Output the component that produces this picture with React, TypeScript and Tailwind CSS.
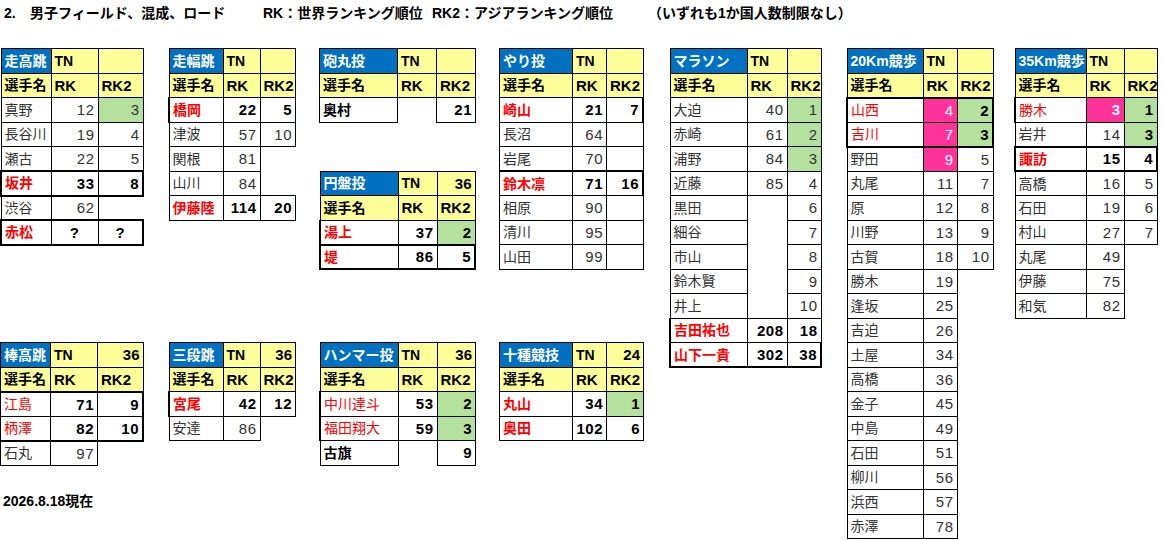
import React from 'react';

type Row = {
  n: string;
  rk?: string;
  rk2?: string;
  nc?: string;
  rkc?: string;
  rk2c?: string;
  mid?: boolean;
  b?: [string, string, string];
};

type SheetData = {
  title: string;
  tn: string;
  w: [string, string];
  rows: Row[];
};

// cell styles
const R = 'text-[#ff0000] font-bold';
const RN = 'text-[#ff0000]';
const K = 'text-black font-bold';
const G = 'bg-[#b4e19e]';
const P = 'bg-[#ff3399] text-white';
const X = 'border-t-0 border-r-0 border-b-0 border-l-0';
const NOB = 'border-b-0';
const NOTB = 'border-t-0 border-b-0';

const BOX: [string, string, string] = [
  'border-l-2 border-t-2 border-b-2',
  'border-t-2 border-b-2',
  'border-r-2 border-t-2 border-b-2',
];

const highJump: SheetData = {
  title: '走高跳', tn: '', w: ['w-[50px]', 'w-[47px]'],
  rows: [
    { n: '真野', rk: '12', rk2: '3', rk2c: G },
    { n: '長谷川', rk: '19', rk2: '4' },
    { n: '瀬古', rk: '22', rk2: '5' },
    { n: '坂井', rk: '33', rk2: '8', nc: R, rkc: K, rk2c: K, b: BOX },
    { n: '渋谷', rk: '62', b: ['', '', X] },
    { n: '赤松', rk: '?', rk2: '?', nc: R, rkc: K, rk2c: K, mid: true, b: BOX },
  ],
};

const longJump: SheetData = {
  title: '走幅跳', tn: '', w: ['w-[54px]', 'w-[37px]'],
  rows: [
    { n: '橋岡', rk: '22', rk2: '5', nc: R, rkc: K, rk2c: K, b: ['border-l-2', '', ''] },
    { n: '津波', rk: '57', rk2: '10' },
    { n: '関根', rk: '81', b: ['', '', X] },
    { n: '山川', rk: '84', b: ['', '', X] },
    { n: '伊藤陸', rk: '114', rk2: '20', nc: R, rkc: K, rk2c: K },
  ],
};

const shotPut: SheetData = {
  title: '砲丸投', tn: '', w: ['w-[78px]', 'w-[39px]'],
  rows: [{ n: '奥村', rk: '', rk2: '21', nc: K, rk2c: K, b: ['', NOB, ''] }],
};

const discus: SheetData = {
  title: '円盤投', tn: '36', w: ['w-[78px]', 'w-[39px]'],
  rows: [
    { n: '湯上', rk: '37', rk2: '2', nc: R, rkc: K, rk2c: `${K} ${G}`, b: ['border-l-2 border-b-2', 'border-b-2', 'border-b-2'] },
    { n: '堤', rk: '86', rk2: '5', nc: R, rkc: K, rk2c: K, b: ['border-l-2 border-b-2', 'border-b-2', 'border-r-2 border-b-2'] },
  ],
};

const javelin: SheetData = {
  title: 'やり投', tn: '', w: ['w-[73px]', 'w-[34px]'],
  rows: [
    { n: '崎山', rk: '21', rk2: '7', nc: R, rkc: K, rk2c: K, b: ['', '', 'border-r-2'] },
    { n: '長沼', rk: '64', rk2: '' },
    { n: '岩尾', rk: '70', rk2: '' },
    { n: '鈴木凛', rk: '71', rk2: '16', nc: R, rkc: K, rk2c: K, b: ['border-t-2', 'border-t-2', 'border-t-2 border-r-2'] },
    { n: '相原', rk: '90', rk2: '' },
    { n: '清川', rk: '95', rk2: '' },
    { n: '山田', rk: '99', rk2: '' },
  ],
};

const marathon: SheetData = {
  title: 'マラソン', tn: '', w: ['w-[77px]', 'w-[40px]'],
  rows: [
    { n: '大迫', rk: '40', rk2: '1', rk2c: G },
    { n: '赤崎', rk: '61', rk2: '2', rk2c: G },
    { n: '浦野', rk: '84', rk2: '3', rk2c: G },
    { n: '近藤', rk: '85', rk2: '4' },
    { n: '黒田', rk: '', rk2: '6', b: ['', NOB, ''] },
    { n: '細谷', rk: '', rk2: '7', b: ['', NOTB, ''] },
    { n: '市山', rk: '', rk2: '8', b: ['', NOTB, ''] },
    { n: '鈴木賢', rk: '', rk2: '9', b: ['', NOTB, ''] },
    { n: '井上', rk: '', rk2: '10', b: ['', 'border-t-0', ''] },
    { n: '吉田祐也', rk: '208', rk2: '18', nc: R, rkc: K, rk2c: K, b: ['border-l-2', '', ''] },
    { n: '山下一貴', rk: '302', rk2: '38', nc: R, rkc: K, rk2c: K, b: ['border-l-2 border-b-2', 'border-b-2', 'border-r-2 border-b-2'] },
  ],
};

const walk20: SheetData = {
  title: '20Km競歩', tn: '', w: ['w-[76px]', 'w-[34px]'],
  rows: [
    { n: '山西', rk: '4', rk2: '2', nc: RN, rkc: P, rk2c: `${K} ${G}`, b: ['border-l-2 border-t-2', 'border-t-2', 'border-t-2 border-r-2'] },
    { n: '吉川', rk: '7', rk2: '3', nc: RN, rkc: P, rk2c: `${K} ${G}`, b: ['border-l-2 border-b-2', 'border-b-2', 'border-b-2 border-r-2'] },
    { n: '野田', rk: '9', rk2: '5', rkc: P },
    { n: '丸尾', rk: '11', rk2: '7' },
    { n: '原', rk: '12', rk2: '8' },
    { n: '川野', rk: '13', rk2: '9' },
    { n: '古賀', rk: '18', rk2: '10' },
    ...['勝木:19', '逢坂:25', '吉迫:26', '土屋:34', '高橋:36', '金子:45', '中島:49', '石田:51', '柳川:56', '浜西:57', '赤澤:78'].map(
      (s): Row => {
        const [n, rk] = s.split(':');
        return { n, rk, b: ['', '', X] };
      },
    ),
  ],
};

const walk35: SheetData = {
  title: '35Km競歩', tn: '', w: ['w-[71px]', 'w-[38px]'],
  rows: [
    { n: '勝木', rk: '3', rk2: '1', nc: RN, rkc: `${P} font-bold`, rk2c: `${K} ${G}`, b: ['border-l-2', '', ''] },
    { n: '岩井', rk: '14', rk2: '3', rk2c: `${K} ${G}` },
    { n: '諏訪', rk: '15', rk2: '4', nc: R, rkc: K, rk2c: K, b: BOX },
    { n: '高橋', rk: '16', rk2: '5' },
    { n: '石田', rk: '19', rk2: '6' },
    { n: '村山', rk: '27', rk2: '7' },
    { n: '丸尾', rk: '49', b: ['', '', X] },
    { n: '伊藤', rk: '75', b: ['', '', X] },
    { n: '和気', rk: '82', b: ['', '', X] },
  ],
};

const poleVault: SheetData = {
  title: '棒高跳', tn: '36', w: ['w-[50px]', 'w-[47px]'],
  rows: [
    { n: '江島', rk: '71', rk2: '9', nc: RN, rkc: K, rk2c: K, b: ['border-t-2', 'border-t-2', 'border-t-2 border-r-2'] },
    { n: '柄澤', rk: '82', rk2: '10', nc: RN, rkc: K, rk2c: K, b: ['border-b-2', 'border-b-2', 'border-b-2 border-r-2'] },
    { n: '石丸', rk: '97', b: ['', '', X] },
  ],
};

const tripleJump: SheetData = {
  title: '三段跳', tn: '36', w: ['w-[54px]', 'w-[37px]'],
  rows: [
    { n: '宮尾', rk: '42', rk2: '12', nc: R, rkc: K, rk2c: K, b: ['border-l-2', '', ''] },
    { n: '安達', rk: '86', b: ['', '', X] },
  ],
};

const hammer: SheetData = {
  title: 'ハンマー投', tn: '36', w: ['w-[78px]', 'w-[39px]'],
  rows: [
    { n: '中川達斗', rk: '53', rk2: '2', nc: RN, rkc: K, rk2c: `${K} ${G}`, b: ['border-l-2', '', ''] },
    { n: '福田翔大', rk: '59', rk2: '3', nc: RN, rkc: K, rk2c: `${K} ${G}`, b: ['border-l-2', '', ''] },
    { n: '古旗', rk: '', rk2: '9', nc: K, rk2c: K, b: ['', NOB, ''] },
  ],
};

const decathlon: SheetData = {
  title: '十種競技', tn: '24', w: ['w-[73px]', 'w-[34px]'],
  rows: [
    { n: '丸山', rk: '34', rk2: '1', nc: R, rkc: K, rk2c: `${K} ${G}` },
    { n: '奥田', rk: '102', rk2: '6', nc: R, rkc: K, rk2c: K },
  ],
};

const cell = 'border border-black p-0 whitespace-nowrap overflow-hidden leading-none';

function Sheet({ s, className }: { s: SheetData; className: string }) {
  return (
    <table className={`table-fixed border-collapse self-start w-full ${className}`}>
      <colgroup>
        <col className={s.w[0]} />
        <col className={s.w[1]} />
        <col />
      </colgroup>
      <tbody>
        <tr className="h-[24.5px]">
          <td className={`${cell} bg-[#0070c0] text-white font-bold pl-[3px]`}>{s.title}</td>
          <td className={`${cell} bg-[#ffff99] text-black font-bold pl-[3px]`}>TN</td>
          <td className={`${cell} bg-[#ffff99] text-black font-bold text-right pr-[3px] text-[15px]`}>{s.tn}</td>
        </tr>
        <tr className="h-[24.5px]">
          <td className={`${cell} bg-[#ffff99] text-black font-bold pl-[3px]`}>選手名</td>
          <td className={`${cell} bg-[#ffff99] text-black font-bold pl-[3px] text-[15px]`}>RK</td>
          <td className={`${cell} bg-[#ffff99] text-black font-bold pl-[3px] text-[15px]`}>RK2</td>
        </tr>
        {s.rows.map((r, i) => {
          const b = r.b ?? ['', '', ''];
          const num = r.mid ? 'text-center' : 'text-right pr-[3px]';
          return (
            <tr key={i} className="h-[24.5px]">
              <td className={`${cell} pl-[3px] ${r.nc ?? ''} ${b[0]}`}>{r.n}</td>
              <td className={`${cell} ${num} text-[15px] tracking-[0.5px] ${r.rkc ?? ''} ${b[1]}`}>{r.rk}</td>
              <td className={`${cell} ${num} text-[15px] tracking-[0.5px] ${r.rk2c ?? ''} ${b[2]}`}>{r.rk2}</td>
            </tr>
          );
        })}
      </tbody>
    </table>
  );
}

export default function App() {
  return (
    <div className="w-[1162px] h-[540px] overflow-hidden bg-white text-[14px] text-[#333] font-['Liberation_Sans','Noto_Sans_CJK_JP',sans-serif]">
      <div className="h-[48px] flex items-start pt-[3px] pl-[4px] text-black font-bold text-[14px] leading-[20px] whitespace-nowrap">
        <span className="w-[26px] shrink-0">2.</span>
        <span className="w-[233px] shrink-0">男子フィールド、混成、ロード</span>
        <span className="w-[169px] shrink-0">RK：世界ランキング順位</span>
        <span className="w-[216px] shrink-0">RK2：アジアランキング順位</span>
        <span>（いずれも1か国人数制限なし）</span>
      </div>

      <div className="grid grid-cols-[144px_24px_128px_23px_157px_23px_145px_25px_153px_24px_148px_20px_144px] grid-rows-[repeat(20,24.5px)]">
        <Sheet s={highJump} className="col-start-1 row-start-1 row-span-8" />
        <Sheet s={poleVault} className="col-start-1 row-start-13 row-span-5" />

        <Sheet s={longJump} className="col-start-3 row-start-1 row-span-7" />
        <Sheet s={tripleJump} className="col-start-3 row-start-13 row-span-4" />

        <Sheet s={shotPut} className="col-start-5 row-start-1 row-span-3" />
        <Sheet s={discus} className="col-start-5 row-start-6 row-span-4" />
        <Sheet s={hammer} className="col-start-5 row-start-13 row-span-5" />

        <Sheet s={javelin} className="col-start-7 row-start-1 row-span-9" />
        <Sheet s={decathlon} className="col-start-7 row-start-13 row-span-4" />

        <Sheet s={marathon} className="col-start-9 row-start-1 row-span-13" />
        <Sheet s={walk20} className="col-start-11 row-start-1 row-span-20" />
        <Sheet s={walk35} className="col-start-13 row-start-1 row-span-11" />

        <div className="col-start-1 col-span-5 row-start-19 flex items-center pl-[3px] text-black font-bold text-[14px]">
          2026.8.18現在
        </div>
      </div>
    </div>
  );
}
